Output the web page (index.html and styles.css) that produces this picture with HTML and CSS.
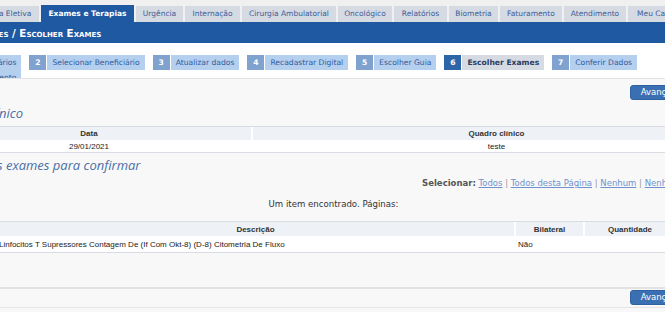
FILE: index.html
```html
<!DOCTYPE html>
<html lang="pt-BR">
<head>
<meta charset="utf-8">
<title>Escolher Exames</title>
<link rel="stylesheet" href="styles.css">
</head>
<body>
<div class="page">
  <nav class="tabs">
    <a class="tab">Consulta Eletiva</a>
    <a class="tab active">Exames e Terapias</a>
    <a class="tab">Urgência</a>
    <a class="tab">Internação</a>
    <a class="tab">Cirurgia Ambulatorial</a>
    <a class="tab">Oncológico</a>
    <a class="tab">Relatórios</a>
    <a class="tab">Biometria</a>
    <a class="tab">Faturamento</a>
    <a class="tab">Atendimento</a>
    <a class="tab">Meu Cadastro</a>
  </nav>
  <div class="crumb">Solicitar Exames / Escolher Exames</div>
  <ol class="steps">
    <li class="step first"><span class="num">1</span><span class="label">Beneficiários<br>em Atendimento</span></li>
    <li class="step"><span class="num">2</span><span class="label">Selecionar Beneficiário</span></li>
    <li class="step"><span class="num">3</span><span class="label">Atualizar dados</span></li>
    <li class="step"><span class="num">4</span><span class="label">Recadastrar Digital</span></li>
    <li class="step"><span class="num">5</span><span class="label">Escolher Guia</span></li>
    <li class="step current"><span class="num">6</span><span class="label">Escolher Exames</span></li>
    <li class="step"><span class="num">7</span><span class="label">Conferir Dados</span></li>
  </ol>
  <main class="panel">
    <div class="actions"><button class="btn">Avançar</button></div>
    <h2 class="title t-clinico">Quadro clínico</h2>
    <table class="grid g1">
      <colgroup><col class="c-data"><col class="c-quadro"></colgroup>
      <thead><tr><th>Data</th><th>Quadro clínico</th></tr></thead>
      <tbody><tr><td class="center">29/01/2021</td><td class="center">teste</td></tr></tbody>
    </table>
    <h2 class="title t-exames">Selecione os exames para confirmar</h2>
    <div class="select"><b>Selecionar:</b> <a>Todos</a> <span class="sep">|</span> <a>Todos desta Página</a> <span class="sep">|</span> <a>Nenhum</a> <span class="sep">|</span> <a>Nenhum desta Página</a></div>
    <div class="found">Um item encontrado. Páginas:</div>
    <table class="grid g2">
      <colgroup><col class="c-cod"><col class="c-desc"><col class="c-bil"><col class="c-qtd"><col class="c-sel"></colgroup>
      <thead><tr><th>Código</th><th>Descrição</th><th>Bilateral</th><th>Quantidade</th><th>Selecionar</th></tr></thead>
      <tbody><tr><td>40304108</td><td>Linfocitos T Supressores Contagem De (If Com Okt-8) (D-8) Citometria De Fluxo</td><td>Não</td><td></td><td></td></tr></tbody>
    </table>
    <div class="bottom"><button class="btn">Avançar</button></div>
  </main>
</div>
</body>
</html>
```
FILE: styles.css
```css
html, body { margin: 0; padding: 0; }
body {
  width: 665px;
  height: 312px;
  overflow: hidden;
  background: #ffffff;
  font-family: "DejaVu Sans", Verdana, sans-serif;
}
.page {
  width: 817px;
  margin-left: -75px;
}
.tabs {
  display: flex;
  align-items: flex-end;
  gap: 2px;
  height: 22px;
  box-sizing: border-box;
  padding: 5px 0 0 38px;
  background: #f0f0f0;
}
.tab {
  flex: none;
  height: 16px;
  line-height: 16px;
  text-align: center;
  background: #d5dae3;
  color: #3d5d96;
  font-size: 7.5px;
  white-space: nowrap;
  overflow: hidden;
}
.tab:nth-child(1) { width: 76px; }
.tab:nth-child(2) { width: 93px; }
.tab:nth-child(3) { width: 47px; }
.tab:nth-child(4) { width: 55px; }
.tab:nth-child(5) { width: 94px; }
.tab:nth-child(6) { width: 54px; }
.tab:nth-child(7) { width: 53px; }
.tab:nth-child(8) { width: 49px; }
.tab:nth-child(9) { width: 62px; }
.tab:nth-child(10) { width: 62px; }
.tab:nth-child(11) { width: 70px; }
.tab.active {
  height: 17px;
  line-height: 17px;
  background: #1f59a2;
  color: #ffffff;
  font-weight: bold;
}
.crumb {
  height: 21px;
  line-height: 23px;
  padding-left: 2px;
  background: #1f59a2;
  color: #ffffff;
  font-weight: bold;
  font-variant: small-caps;
  font-size: 10.3px;
  white-space: nowrap;
}
.steps {
  display: flex;
  align-items: flex-start;
  gap: 8px;
  list-style: none;
  margin: 0;
  padding: 12px 0 0 5px;
  height: 35px;
  box-sizing: border-box;
  overflow: hidden;
}
.step {
  display: flex;
  gap: 1px;
  font-size: 7.6px;
  white-space: nowrap;
}
.num {
  width: 17px;
  height: 15px;
  line-height: 15px;
  text-align: center;
  background: #7fa2cf;
  color: #ffffff;
  font-weight: bold;
}
.label {
  height: 15px;
  line-height: 15px;
  padding: 0 5px;
  background: #b5cfee;
  color: #2f5b9c;
}
.step.first .label {
  height: 30px;
  text-align: right;
}
.step.current .num { background: #2d65a9; }
.step.current .label {
  background: #d6dae3;
  color: #2b3d63;
  font-weight: bold;
}
.panel {
  height: 234px;
  background: #f8f8f8;
  border-top: 1px solid #e3e3e3;
}
.actions {
  display: flex;
  justify-content: flex-end;
  padding: 6px 56px 0 0;
}
.btn {
  height: 15px;
  padding: 0 10px;
  background: #3a70b2;
  border: 1px solid #2e62a3;
  border-radius: 3px;
  color: #ffffff;
  font: 8.5px "DejaVu Sans", Verdana, sans-serif;
  line-height: 13px;
}
.title {
  margin: 0;
  font: italic 400 13px/16px "Open Sans", sans-serif;
  color: #4a6fa6;
}
.t-clinico { margin: 5px 0 5px 0; padding-left: 14px; }
.t-exames { margin: 4px 0 4px 0; padding-left: 8px; }
.grid {
  width: 100%;
  table-layout: fixed;
  border-collapse: separate;
  border-spacing: 2px 0;
  background: #ffffff;
  border-top: 1px solid #d9dde3;
  border-bottom: 1px solid #d9dde3;
  font: 8px "Liberation Sans", Arial, sans-serif;
  color: #222222;
}
.grid th {
  background: #eef2f7;
  font-weight: bold;
  color: #333333;
  padding: 0;
  text-align: center;
}
.grid td {
  padding: 0 2px;
  white-space: nowrap;
  overflow: hidden;
}
.grid td.center { text-align: center; }
.g1 th { height: 13px; }
.g1 td { height: 12px; }
.g2 th { height: 14px; }
.g2 td { height: 16px; }
.c-data { width: 324px; }
.c-quadro { width: 487px; }
.c-cod { width: 68px; }
.c-desc { width: 517px; }
.c-bil { width: 67px; }
.c-qtd { width: 90px; }
.c-sel { width: 63px; }
.select {
  height: 12px;
  line-height: 12px;
  text-align: right;
  padding-right: 4px;
  font-size: 8.5px;
  color: #888888;
}
.select b { color: #555555; }
.select a { color: #6f92cc; text-decoration: underline; }
.select .sep { color: #999999; }
.found {
  height: 12px;
  line-height: 12px;
  margin: 9px 0 11px;
  text-align: center;
  font-size: 8.6px;
  color: #333333;
}
.bottom {
  display: flex;
  justify-content: flex-end;
  height: 21px;
  margin-top: 34px;
  padding: 1px 56px 0 0;
  box-sizing: border-box;
  border-top: 2px solid #e2e2e2;
  border-bottom: 1px solid #e5e5e5;
}
```
